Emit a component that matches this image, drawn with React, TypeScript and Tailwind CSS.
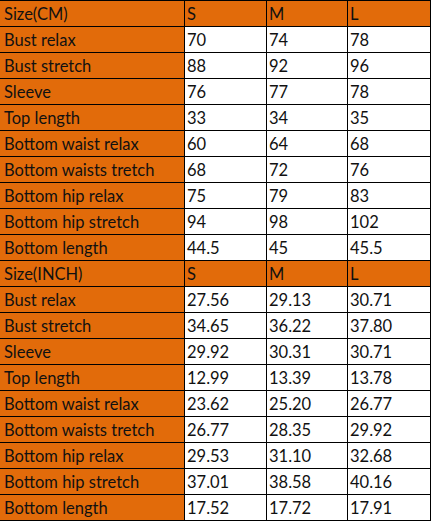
import React from "react";

const rowsCM: [string, string, string, string][] = [
  ["Bust relax", "70", "74", "78"],
  ["Bust stretch", "88", "92", "96"],
  ["Sleeve", "76", "77", "78"],
  ["Top length", "33", "34", "35"],
  ["Bottom waist relax", "60", "64", "68"],
  ["Bottom waists tretch", "68", "72", "76"],
  ["Bottom hip relax", "75", "79", "83"],
  ["Bottom hip stretch", "94", "98", "102"],
  ["Bottom length", "44.5", "45", "45.5"],
];
const rowsIN: [string, string, string, string][] = [
  ["Bust relax", "27.56", "29.13", "30.71"],
  ["Bust stretch", "34.65", "36.22", "37.80"],
  ["Sleeve", "29.92", "30.31", "30.71"],
  ["Top length", "12.99", "13.39", "13.78"],
  ["Bottom waist relax", "23.62", "25.20", "26.77"],
  ["Bottom waists tretch", "26.77", "28.35", "29.92"],
  ["Bottom hip relax", "29.53", "31.10", "32.68"],
  ["Bottom hip stretch", "37.01", "38.58", "40.16"],
  ["Bottom length", "17.52", "17.72", "17.91"],
];

function Header({ label }: { label: string }) {
  return (
    <>
      <div className="bg-[#e26b0a] pl-[4px] flex items-end pb-[4px]">{label}</div>
      <div className="bg-[#e26b0a] pl-[2px] flex items-end pb-[4px]">S</div>
      <div className="bg-[#e26b0a] pl-[2px] flex items-end pb-[4px]">M</div>
      <div className="bg-[#e26b0a] pl-[2px] flex items-end pb-[4px]">L</div>
    </>
  );
}

function Row({ r }: { r: [string, string, string, string] }) {
  return (
    <>
      <div className="bg-[#e26b0a] pl-[4px] flex items-end pb-[4px]">{r[0]}</div>
      <div className="bg-white pl-[2px] flex items-end pb-[4px]">{r[1]}</div>
      <div className="bg-white pl-[2px] flex items-end pb-[4px]">{r[2]}</div>
      <div className="bg-white pl-[2px] flex items-end pb-[4px]">{r[3]}</div>
    </>
  );
}

export default function App() {
  return (
    <div className="w-[431px] h-[521px] bg-white">
      <div
        className="grid grid-cols-[184px_81px_80px_82px] auto-rows-[25px] gap-px bg-black pt-px pr-px pb-px text-[16.5px] text-[#111] leading-none"
        style={{ fontFamily: "Lato, 'Noto Sans', sans-serif" }}
      >
        <Header label="Size(CM)" />
        {rowsCM.map((r) => (
          <Row key={"c" + r[0]} r={r} />
        ))}
        <Header label="Size(INCH)" />
        {rowsIN.map((r) => (
          <Row key={"i" + r[0]} r={r} />
        ))}
      </div>
    </div>
  );
}
